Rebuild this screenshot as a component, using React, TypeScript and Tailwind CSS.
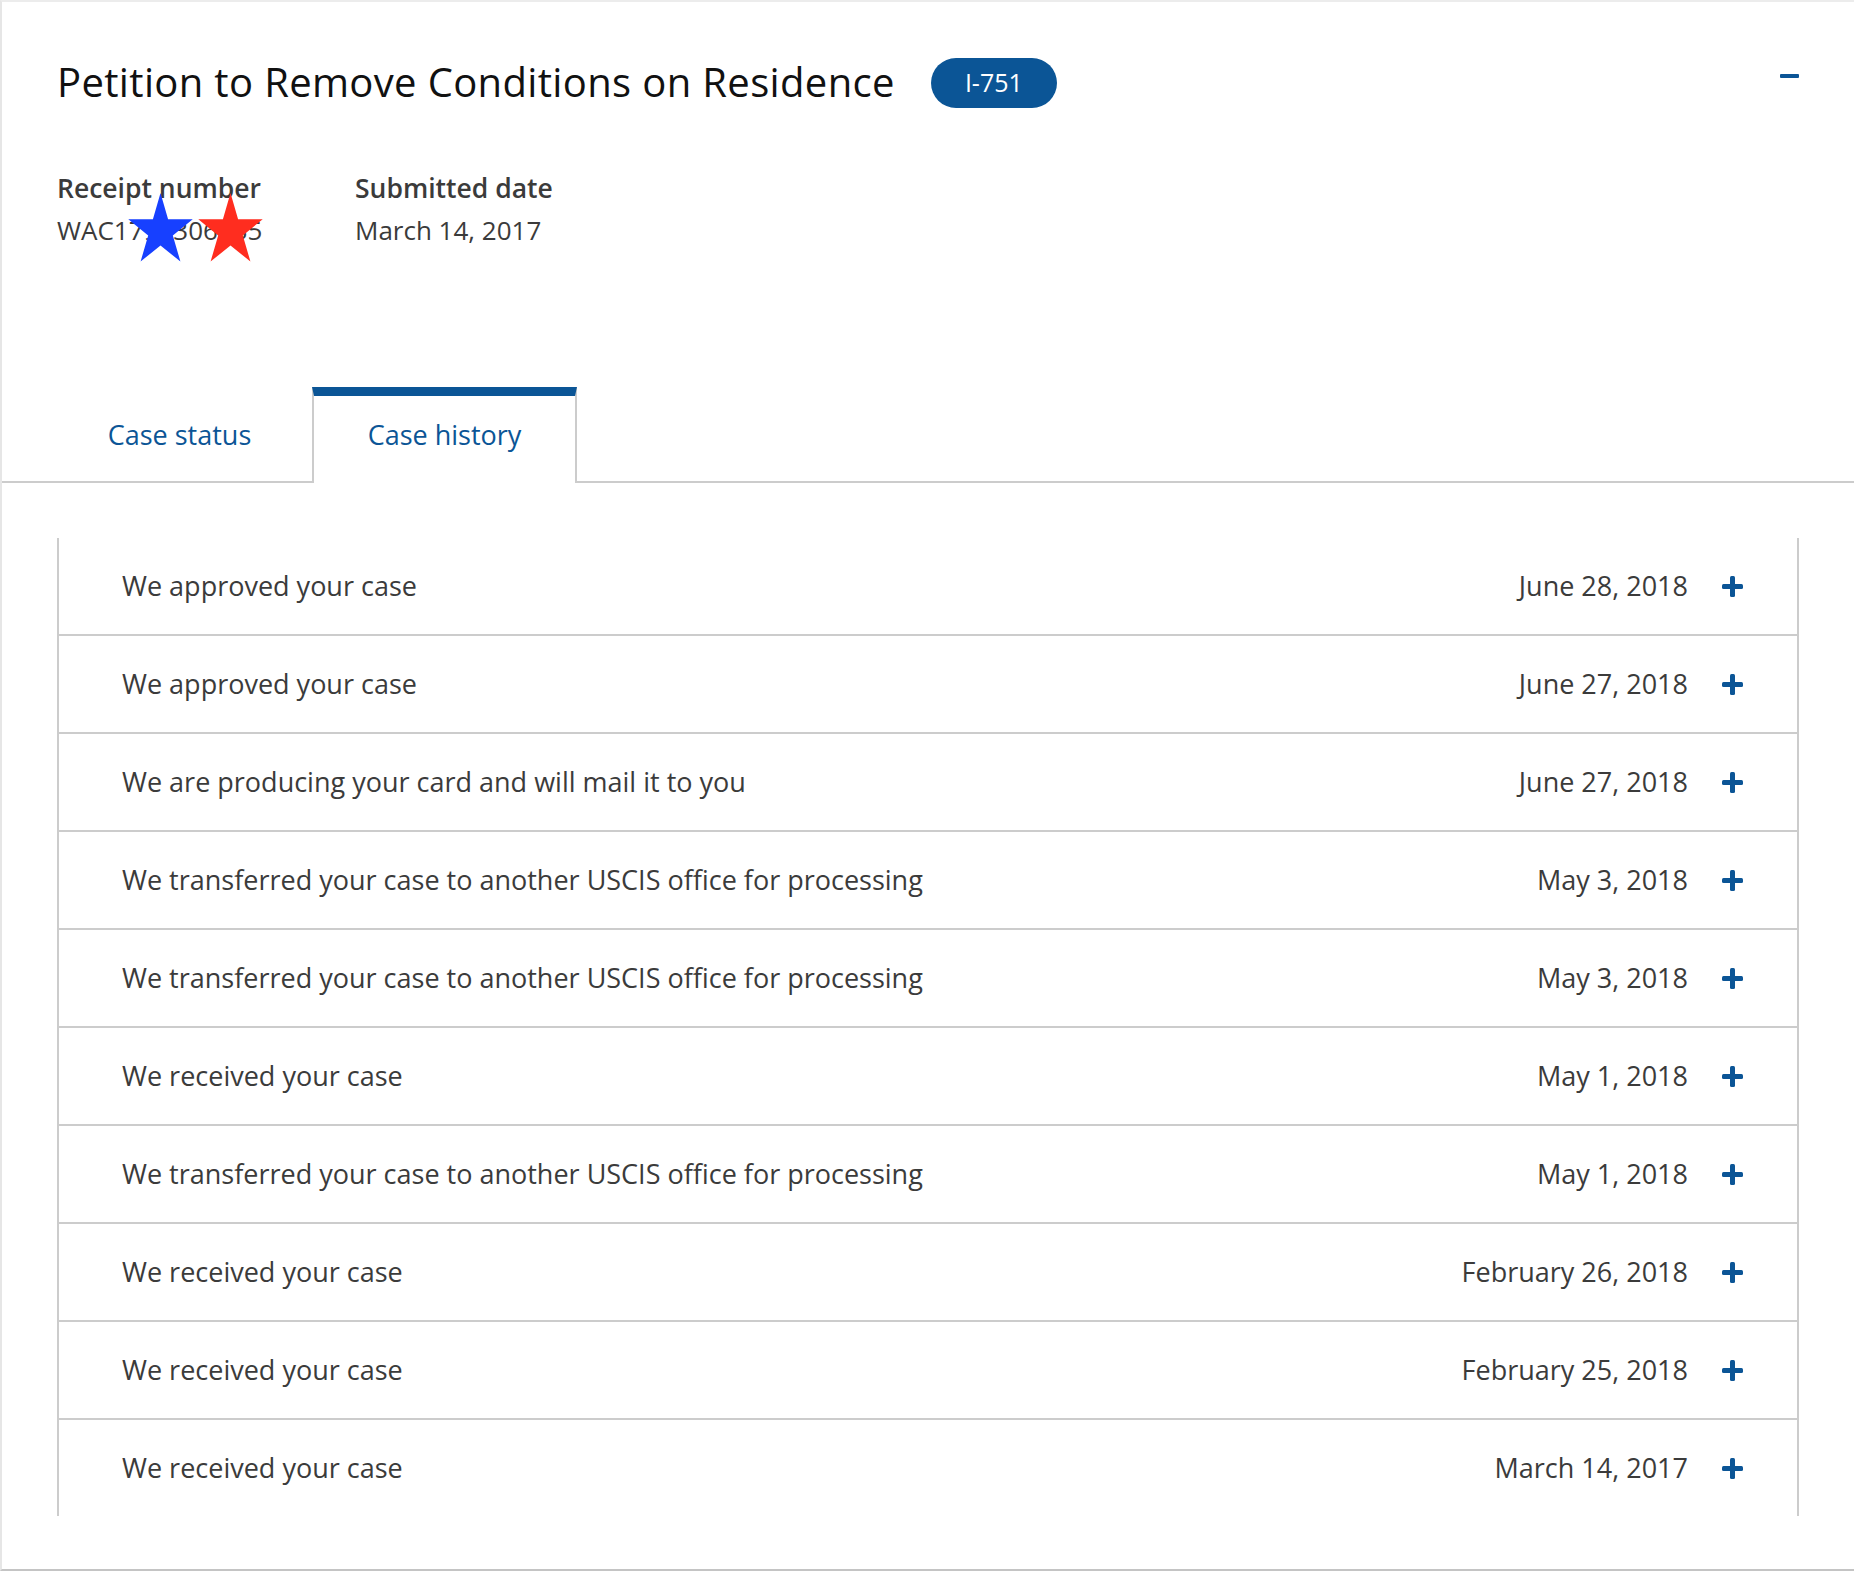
import React from "react";

interface HistoryItem {
  text: string;
  date: string;
}

const history: HistoryItem[] = [
  { text: "We approved your case", date: "June 28, 2018" },
  { text: "We approved your case", date: "June 27, 2018" },
  { text: "We are producing your card and will mail it to you", date: "June 27, 2018" },
  { text: "We transferred your case to another USCIS office for processing", date: "May 3, 2018" },
  { text: "We transferred your case to another USCIS office for processing", date: "May 3, 2018" },
  { text: "We received your case", date: "May 1, 2018" },
  { text: "We transferred your case to another USCIS office for processing", date: "May 1, 2018" },
  { text: "We received your case", date: "February 26, 2018" },
  { text: "We received your case", date: "February 25, 2018" },
  { text: "We received your case", date: "March 14, 2017" },
];

function Star({ color }: { color: string }) {
  return (
    <svg width="65" height="69" viewBox="2 2 96 91" preserveAspectRatio="none">
      <polygon
        points="50,2 61.2,36.5 97.6,36.5 68.2,57.9 79.4,92.5 50,71.1 20.6,92.5 31.8,57.9 2.4,36.5 38.8,36.5"
        fill={color}
      />
    </svg>
  );
}

function PlusIcon() {
  return (
    <svg width="21" height="21" viewBox="0 0 21 21">
      <rect x="8" y="0" width="5" height="21" rx="1.5" fill="#0b5596" />
      <rect x="0" y="8" width="21" height="5" rx="1.5" fill="#0b5596" />
    </svg>
  );
}

export default function App() {
  return (
    <div className="w-[1854px] bg-white font-['Open_Sans','Lato',sans-serif] text-[#3b3b3b]">
      <div className="border-t-2 border-l-2 border-b-2 border-t-[#ececec] border-l-[#e6e6e6] border-b-[#c4c4c4] shadow-[0_1px_3px_rgba(0,0,0,0.2)] pb-[53px]">
        {/* Header */}
        <div className="flex items-center pl-[55px] pr-[55px] pt-[56px]">
          <h1 className="-mt-[3px] text-[40px] leading-none tracking-[0.35px] text-[#111]">
            Petition to Remove Conditions on Residence
          </h1>
          <span className="ml-[36px] flex h-[50px] w-[126px] items-center justify-center rounded-full bg-[#0b5596] text-[25px] text-white">
            I-751
          </span>
          <span className="mb-[14px] ml-auto h-[4px] w-[19px] rounded-[1px] bg-[#0b5596]" />
        </div>

        {/* Receipt info */}
        <div className="mt-[60px] flex pl-[55px] leading-[42px]">
          <div className="relative w-[298px]">
            <p className="-mt-[1px] text-[26.5px] font-semibold">Receipt number</p>
            <p className="text-[26px]">WAC1790306035</p>
            <div className="absolute left-[71px] top-[25px] flex gap-[5px]">
              <Star color="#1740ff" />
              <Star color="#ff2d1f" />
            </div>
          </div>
          <div>
            <p className="-mt-[1px] text-[26.5px] font-semibold">Submitted date</p>
            <p className="text-[26px]">March 14, 2017</p>
          </div>
        </div>

        {/* Tabs */}
        <div className="mt-[136px] flex border-b-2 border-[#cccccc] pl-[45px]">
          <div className="flex h-[94px] w-[265px] items-center justify-center pt-[2px] text-[27px] text-[#0b5596]">
            Case status
          </div>
          <div className="-mb-[2px] flex h-[96px] w-[265px] items-center justify-center border-x-2 border-t-[9px] border-x-[#cccccc] border-t-[#0b5596] bg-white pb-[8px] text-[27px] text-[#0b5596]">
            Case history
          </div>
        </div>

        {/* History list */}
        <div className="mx-[55px] mt-[55px] border-x-2 border-[#cccccc]">
          {history.map((item, i) => {
            const last = i === history.length - 1;
            return (
              <div
                key={i}
                className={`flex items-center pl-[63px] pr-[54px] text-[27px] ${
                  last ? "h-[96px]" : "h-[98px] border-b-2 border-[#cccccc]"
                }`}
              >
                <span className="flex-1">{item.text}</span>
                <span>{item.date}</span>
                <span className="ml-[34px] flex">
                  <PlusIcon />
                </span>
              </div>
            );
          })}
        </div>
      </div>
    </div>
  );
}
